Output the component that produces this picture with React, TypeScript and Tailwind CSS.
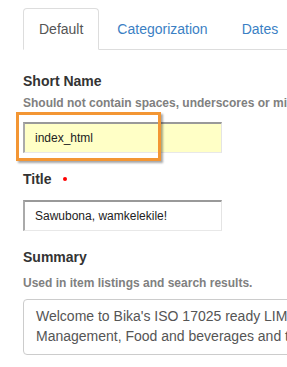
const TABS = ['Default', 'Categorization', 'Dates'];

export default function App() {
  return (
    <div className="w-[287px] h-[367px] overflow-hidden bg-white font-['Liberation_Sans',Arial,sans-serif] text-[#333]">
      {/* Tabs */}
      <div className="ml-[23px] mt-[8px] flex border-b border-[#ddd] w-[500px]">
        {TABS.map((t, i) => (
          <div
            key={t}
            className={
              i === 0
                ? '-mb-px mr-[2px] px-[15px] py-[10px] text-[14px] leading-5 text-[#555] bg-white border border-[#ddd] border-b-white rounded-t-[4px]'
                : '-mb-px mr-[2px] px-[15px] py-[10px] text-[14px] leading-5 text-[#3b7fc4] border border-transparent'
            }
          >
            {t}
          </div>
        ))}
      </div>

      <div className="pl-[23px]">
        {/* Short Name */}
        <div className="mt-[21px] text-[14px] leading-5 font-bold">Short Name</div>
        <div className="mt-[4px] text-[12px] leading-4 font-bold text-[#808080] whitespace-nowrap">
          Should not contain spaces, underscores or mixed case.
        </div>
        <div className="relative mt-[11px] w-[199px]">
          <div className="h-[31px] bg-[#ffffc6] border-t-2 border-l-2 border-r border-b border-t-[#999] border-l-[#aaa] border-r-[#e4e4e4] border-b-[#e8e8e8] pl-[10px] text-[12px] leading-[28px] text-[#222]">
            index_html
          </div>
          <div className="absolute left-[-7px] top-[-10px] w-[145px] h-[49px] border-[3px] border-[#f39634] shadow-[2px_2px_2px_rgba(0,0,0,0.35)]" />
        </div>

        {/* Title */}
        <div className="mt-[16px] flex items-center text-[14px] leading-5 font-bold">
          Title
          <span className="ml-[11px] w-[4px] h-[4px] rounded-full bg-[#f00]" />
        </div>
        <div className="mt-[11px] w-[199px] h-[31px] bg-white border-t-2 border-l-2 border-r border-b border-t-[#999] border-l-[#aaa] border-r-[#e4e4e4] border-b-[#e8e8e8] pl-[10px] text-[12px] leading-[28px] text-[#222]">
          Sawubona, wamkelekile!
        </div>

        {/* Summary */}
        <div className="mt-[16px] text-[14px] leading-5 font-bold">Summary</div>
        <div className="mt-[8px] text-[12px] leading-4 font-bold text-[#808080]">
          Used in item listings and search results.
        </div>
        <div className="mt-[8px] w-[420px] h-[56px] border border-[#ccc] rounded-[4px] px-[12px] py-[6px] text-[14px] leading-5 text-[#555] whitespace-nowrap overflow-hidden">
          <div>Welcome to Bika's ISO 17025 ready LIMS for Environmental</div>
          <div>Management, Food and beverages and the Pharmaceutical</div>
        </div>
      </div>
    </div>
  );
}
